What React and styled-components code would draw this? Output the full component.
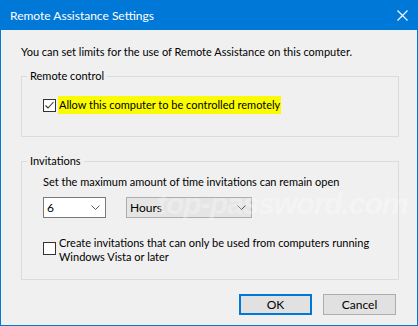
import React from "react";
import styled, { createGlobalStyle } from "styled-components";

const GlobalStyle = createGlobalStyle`
  html, body {
    margin: 0;
    padding: 0;
    background: #f0f0f0;
  }
  body {
    font-family: Lato, "Liberation Sans", sans-serif;
    font-size: 11px;
    color: #000;
  }
  * {
    box-sizing: border-box;
  }
`;

const Check = ({ checked }) => (
  <CheckBox>
    {checked && (
      <svg width="11" height="11" viewBox="0 0 11 11">
        <polyline
          points="1.5,5.5 4,8 9.5,2"
          fill="none"
          stroke="#333"
          strokeWidth="1.1"
        />
      </svg>
    )}
  </CheckBox>
);

const Chevron = () => (
  <svg width="9" height="5" viewBox="0 0 9 5">
    <polyline points="0.5,0.5 4.5,4.5 8.5,0.5" fill="none" stroke="#555" strokeWidth="1" />
  </svg>
);

const App = () => {
  return (
    <>
      <GlobalStyle />
      <Window>
        <TitleBar>
          <Title>Remote Assistance Settings</Title>
          <CloseButton>
            <svg width="11" height="11" viewBox="0 0 11 11">
              <path d="M0.5 0.5 L10.5 10.5 M10.5 0.5 L0.5 10.5" stroke="#fff" strokeWidth="1.1" />
            </svg>
          </CloseButton>
        </TitleBar>
        <Body>
          <Intro>You can set limits for the use of Remote Assistance on this computer.</Intro>

          <Group $gap={12} $bottom={22}>
            <Legend>Remote control</Legend>
            <GroupBody>
              <CheckRow>
                <Check checked />
                <Highlight>Allow this computer to be controlled remotely</Highlight>
              </CheckRow>
            </GroupBody>
          </Group>

          <Group $gap={5} $bottom={15} $top={16}>
            <Legend>Invitations</Legend>
            <GroupBody>
              <Line>Set the maximum amount of time invitations can remain open</Line>
              <ComboRow>
                <Combo $width={63}>
                  <span>6</span>
                  <Chevron />
                </Combo>
                <Combo $width={126} $flat>
                  <span>Hours</span>
                  <Chevron />
                </Combo>
              </ComboRow>
              <CheckRow $top={18} $align="flex-start">
                <CheckWrap>
                  <Check />
                </CheckWrap>
                <Wrapped>
                  Create invitations that can only be used from computers running
                  <br />
                  Windows Vista or later
                </Wrapped>
              </CheckRow>
            </GroupBody>
          </Group>

          <Buttons>
            <Button $default>OK</Button>
            <Button>Cancel</Button>
          </Buttons>
        </Body>
        <Watermark>top-password.com</Watermark>
      </Window>
    </>
  );
};

export default App;

const Window = styled.div`
  position: relative;
  width: 418px;
  height: 326px;
  border: 1px solid #0078d7;
  background: #f0f0f0;
  overflow: hidden;
`;

const TitleBar = styled.div`
  display: flex;
  align-items: center;
  justify-content: space-between;
  height: 30px;
  margin-top: -1px;
  padding: 1px 9px 0 9px;
  background: #0078d7;
  color: #fff;
`;

const Title = styled.div`
  font-size: 12px;
  line-height: 16px;
`;

const CloseButton = styled.div`
  display: flex;
  width: 11px;
  height: 11px;
`;

const Body = styled.div`
  display: flex;
  flex-direction: column;
  padding: 14px 18px 0 20px;
`;

const Intro = styled.div`
  line-height: 16px;
  white-space: nowrap;
`;

const Group = styled.fieldset`
  margin: ${(p) => p.$top || 8}px 0 0 0;
  padding: 0 0 ${(p) => p.$bottom}px 5px;
  min-width: 0;
  border: 1px solid #dcdcdc;
  display: flex;
  flex-direction: column;

  & > div {
    padding-top: ${(p) => p.$gap}px;
  }
`;

const Legend = styled.legend`
  padding: 0 3px;
  line-height: 16px;
`;

const GroupBody = styled.div`
  display: flex;
  flex-direction: column;
  padding-left: 16px;
`;

const CheckRow = styled.div`
  display: flex;
  align-items: ${(p) => p.$align || "center"};
  gap: 2px;
  margin-top: ${(p) => p.$top || 0}px;
`;

const CheckWrap = styled.div`
  padding-top: 6px;
`;

const CheckBox = styled.div`
  display: flex;
  align-items: center;
  justify-content: center;
  flex: none;
  width: 13px;
  height: 13px;
  border: 1px solid #333;
  background: #fff;
`;

const Highlight = styled.span`
  background: #fcfc00;
  line-height: 18px;
  padding: 0 1px;
`;

const Wrapped = styled.div`
  line-height: 14px;
  padding-left: 1px;
  white-space: nowrap;
`;

const Line = styled.div`
  line-height: 16px;
  white-space: nowrap;
`;

const ComboRow = styled.div`
  display: flex;
  gap: 20px;
  margin-top: 7px;
`;

const Combo = styled.div`
  display: flex;
  align-items: center;
  justify-content: space-between;
  width: ${(p) => p.$width}px;
  height: 21px;
  padding: 0 5px 0 3px;
  border: 1px solid ${(p) => (p.$flat ? "#adadad" : "#7a7a7a")};
  background: ${(p) => (p.$flat ? "#e5e5e5" : "#fff")};
  line-height: 16px;
  font-size: 12px;
`;

const Buttons = styled.div`
  display: flex;
  justify-content: flex-end;
  gap: 11px;
  margin-top: 14px;
  padding-right: 3px;
`;

const Button = styled.div`
  display: flex;
  align-items: center;
  justify-content: center;
  width: 73px;
  height: 21px;
  background: #e1e1e1;
  border: ${(p) => (p.$default ? "2px solid #0078d7" : "1px solid #adadad")};
  line-height: 16px;
  font-size: 12px;
`;

const Watermark = styled.div`
  position: absolute;
  left: 156px;
  top: 186px;
  font-family: "Liberation Sans", sans-serif;
  font-size: 30px;
  font-weight: bold;
  font-style: italic;
  letter-spacing: -1px;
  color: rgba(255, 255, 255, 0.3);
  pointer-events: none;
  white-space: nowrap;
`;
